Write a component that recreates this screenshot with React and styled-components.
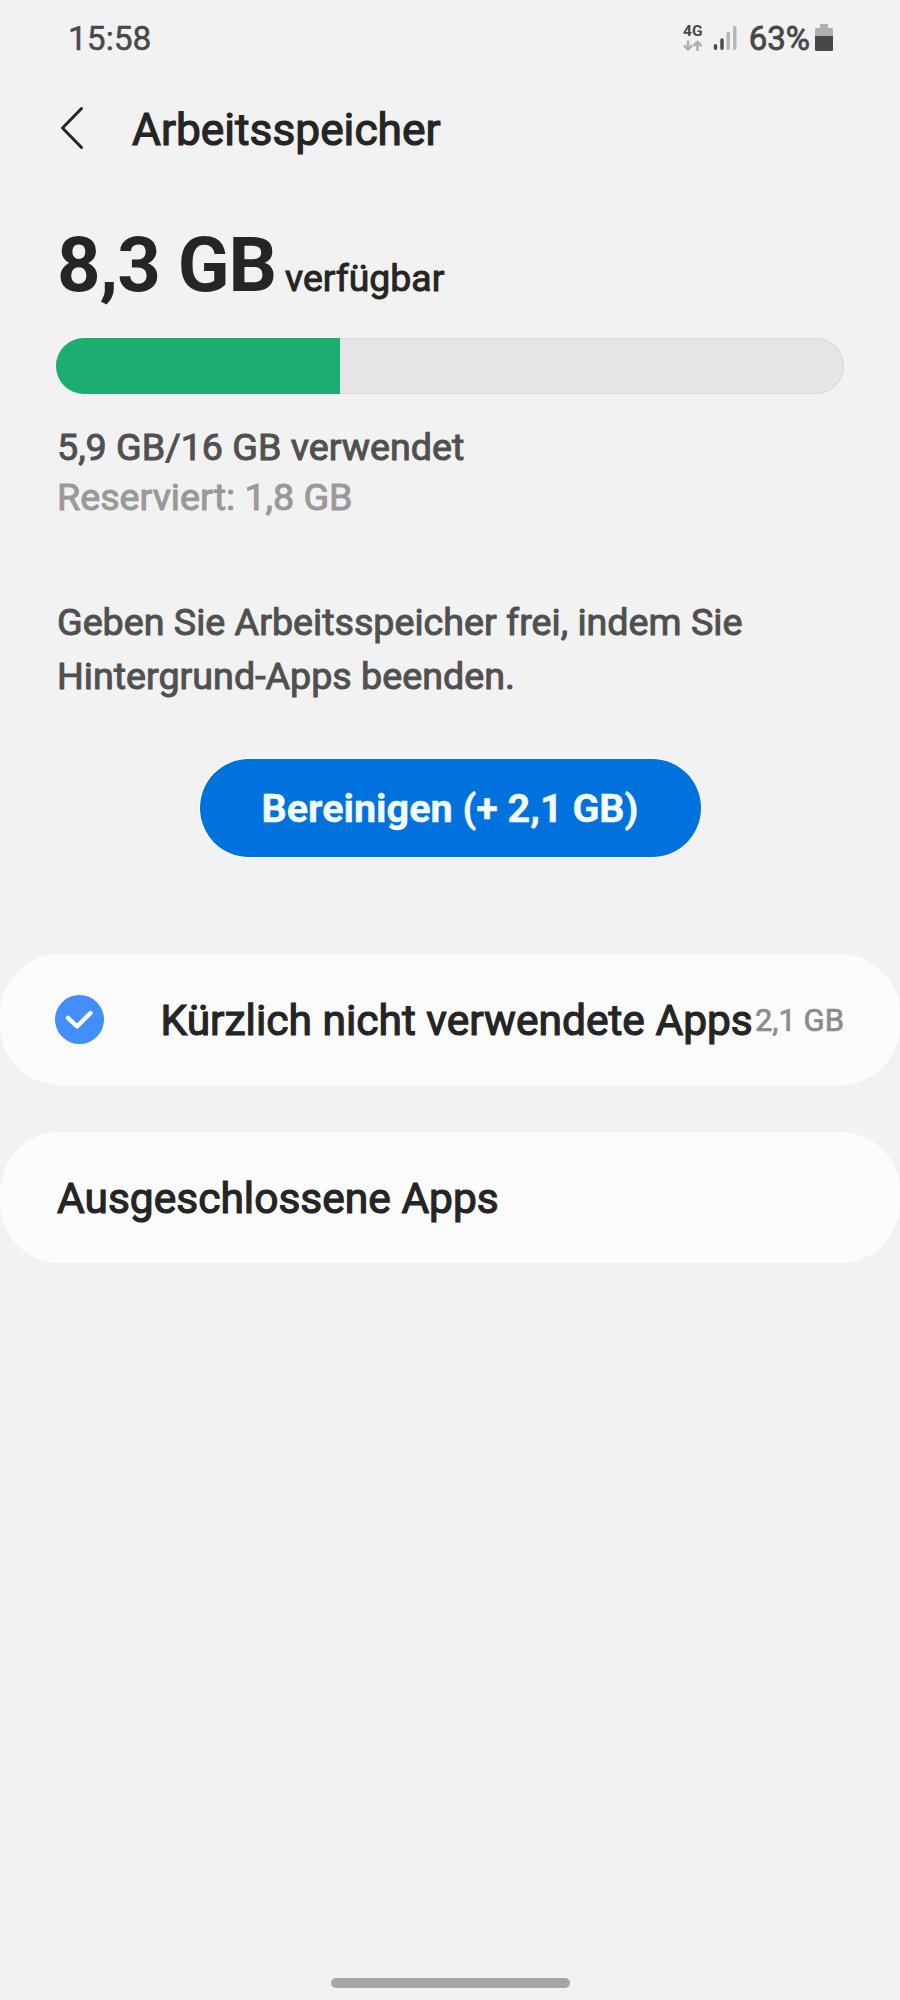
import React, { useState } from 'react'
import styled, { createGlobalStyle } from 'styled-components'

const GlobalStyle = createGlobalStyle`
  * {
    box-sizing: border-box;
  }
  body {
    margin: 0;
    background: #f2f2f2;
    font-family: Roboto, 'Noto Sans', sans-serif;
    color: #252525;
  }
  button {
    font-family: inherit;
    border: none;
    padding: 0;
    cursor: pointer;
  }
`

const Screen = styled.div`
  display: flex;
  flex-direction: column;
  width: 900px;
  height: 2000px;
  overflow: hidden;
  background: #f2f2f2;
`

const StatusBar = styled.header`
  display: flex;
  justify-content: space-between;
  height: 76px;
  padding: 0 67px 0 68px;
  color: #484848;
`

const Clock = styled.span`
  font-size: 33.5px;
  line-height: 77px;
  -webkit-text-stroke: .5px currentColor;
`

const StatusIcons = styled.div`
  display: flex;
  align-items: flex-start;
`

const Network = styled.div`
  display: flex;
  flex-direction: column;
  align-items: center;
  width: 20px;
  margin: 22px 10px 0 0;
  font-size: 15.5px;
  font-weight: 700;
  line-height: 18px;
  svg {
    display: block;
  }
`

const SignalIcon = styled.svg`
  margin: 24px 12px 0 0;
`

const Percent = styled.span`
  font-size: 33px;
  line-height: 77px;
  -webkit-text-stroke: .8px currentColor;
`

const BatteryIcon = styled.svg`
  margin: 24px 0 0 5px;
`

const TitleBar = styled.div`
  display: flex;
  height: 108px;
  padding: 0 56px;
`

const BackButton = styled.button`
  width: 76px;
  height: 108px;
  background: none;
  text-align: left;
  svg {
    display: block;
    margin: -4px 0 0 3px;
  }
`

const Title = styled.h1`
  margin: 0;
  font-size: 44.3px;
  font-weight: 400;
  line-height: 108px;
  -webkit-text-stroke: 1.2px currentColor;
`

const Summary = styled.section`
  display: flex;
  flex-direction: column;
  padding: 0 56px;
`

const Available = styled.div`
  display: flex;
  align-items: baseline;
  gap: 9px;
  height: 154px;
  padding-left: 1px;
  line-height: 162px;
`

const Amount = styled.strong`
  font-size: 76px;
  font-weight: 700;
  letter-spacing: -1px;
`

const AmountLabel = styled.span`
  font-size: 37.4px;
  -webkit-text-stroke: 1px currentColor;
`

const Meter = styled.div`
  height: 56px;
  border-radius: 28px;
  background: #e5e5e5;
  box-shadow: inset 0 0 0 1px #d9d9d9;
  overflow: hidden;
`

const MeterFill = styled.div`
  height: 100%;
  background: #1cae70;
`

const Info = styled.p`
  margin: 0;
  padding-left: 1px;
  font-size: 37.65px;
  line-height: ${({ $lineHeight }) => $lineHeight || '50px'};
  color: ${({ $muted }) => ($muted ? '#999999' : '#505050')};
  -webkit-text-stroke: 1px currentColor;
`

const Usage = styled.div`
  padding-top: 28px;
  height: 201px;
`

const CleanButton = styled.button`
  align-self: center;
  width: 501px;
  height: 98px;
  margin-top: 56px;
  padding-top: 2px;
  border-radius: 49px;
  background: #0072de;
  box-shadow: 0 0 0 1.5px #f4fcff;
  color: #f3fcff;
  font-size: 39.5px;
  font-weight: 700;
  line-height: 96px;
  -webkit-text-stroke: .4px currentColor;
`

const CardList = styled.div`
  display: flex;
  flex-direction: column;
  gap: 47px;
  margin-top: 97px;
`

const Card = styled.div`
  display: flex;
  align-items: center;
  height: 131px;
  padding: 2px 56px 0;
  border-radius: 60px;
  background: #fcfcfc;
`

const CheckButton = styled.button`
  width: 49px;
  height: 49px;
  margin: -2px 55.5px 0 -1px;
  border-radius: 50%;
  background: ${({ $checked }) => ($checked ? '#428ffc' : '#c4c4c4')};
  svg {
    display: block;
  }
`

const CardLabel = styled.span`
  flex: 1;
  padding-left: 1px;
  white-space: nowrap;
  font-size: 42.5px;
  -webkit-text-stroke: 1.2px currentColor;
`

const CardValue = styled.span`
  font-size: 31px;
  color: #8c8c8c;
  -webkit-text-stroke: .7px currentColor;
`

const HomeHandle = styled.div`
  width: 239px;
  height: 10px;
  margin: auto auto 12px;
  border-radius: 5px;
  background: #a6a6a6;
`

const memory = { total: 16, used: 5.9, free: '8,3 GB', reserved: '1,8 GB' }

function StatusRow() {
  return (
    <StatusBar>
      <Clock>15:58</Clock>
      <StatusIcons>
        <Network>
          4G
          <svg width="20" height="12" viewBox="0 0 20 12" fill="none" stroke="#b0b0b0" strokeWidth="2.6">
            <path d="M5 .5v9M1 5.500l4 4 4-4M14.500 11V2M10.500 6l4-4 4 4" />
          </svg>
        </Network>
        <SignalIcon width="24" height="27" viewBox="0 0 24 27" strokeWidth="3.4" strokeLinecap="round">
          <path d="M2.500 21.800v2.500M9 16v8.300" stroke="#484848" />
          <path d="M15.200 9.500v14.800M21.800 3.500v20.800" stroke="#b5b5b5" />
        </SignalIcon>
        <Percent>63%</Percent>
        <BatteryIcon width="18" height="28" viewBox="0 0 18 28">
          <path d="M5 0h8v4h3.500q1.500 0 1.500 1.500V12H0V5.500Q0 4 1.500 4H5z" fill="#b0b0b0" />
          <path d="M0 12h18v13.500q0 1.500-1.500 1.500h-15Q0 27 0 25.500z" fill="#484848" />
        </BatteryIcon>
      </StatusIcons>
    </StatusBar>
  )
}

function App() {
  const [checked, setChecked] = useState(true)

  return (
    <>
      <GlobalStyle />
      <Screen>
        <StatusRow />
        <TitleBar>
          <BackButton aria-label="Zurück">
            <svg width="30" height="46" viewBox="0 0 30 46" fill="none" stroke="#252525" strokeWidth="3" strokeLinecap="round" strokeLinejoin="round">
              <path d="M22.500 3.500L3.500 23l19 19.500" />
            </svg>
          </BackButton>
          <Title>Arbeitsspeicher</Title>
        </TitleBar>
        <Summary>
          <Available>
            <Amount>{memory.free}</Amount>
            <AmountLabel>verfügbar</AmountLabel>
          </Available>
          <Meter>
            <MeterFill style={{ width: `${((memory.used / memory.total) * 97.7).toFixed(2)}%` }} />
          </Meter>
          <Usage>
            <Info>5,9 GB/16 GB verwendet</Info>
            <Info $muted>Reserviert: {memory.reserved}</Info>
          </Usage>
          <Info $lineHeight="54px">
            Geben Sie Arbeitsspeicher frei, indem Sie Hintergrund-Apps beenden.
          </Info>
          <CleanButton>Bereinigen (+ 2,1 GB)</CleanButton>
        </Summary>
        <CardList>
          <Card>
            <CheckButton
              $checked={checked}
              aria-label="Auswählen"
              onClick={() => setChecked(!checked)}
            >
              <svg width="49" height="49" viewBox="0 0 49 49" fill="none" stroke="#fcfcfc" strokeWidth="4.400" strokeLinecap="round" strokeLinejoin="round">
                <path d="M13 22.800l9 8.700 13.500-13.500" />
              </svg>
            </CheckButton>
            <CardLabel>Kürzlich nicht verwendete Apps</CardLabel>
            <CardValue>2,1 GB</CardValue>
          </Card>
          <Card>
            <CardLabel>Ausgeschlossene Apps</CardLabel>
          </Card>
        </CardList>
        <HomeHandle />
      </Screen>
    </>
  )
}

export default App
